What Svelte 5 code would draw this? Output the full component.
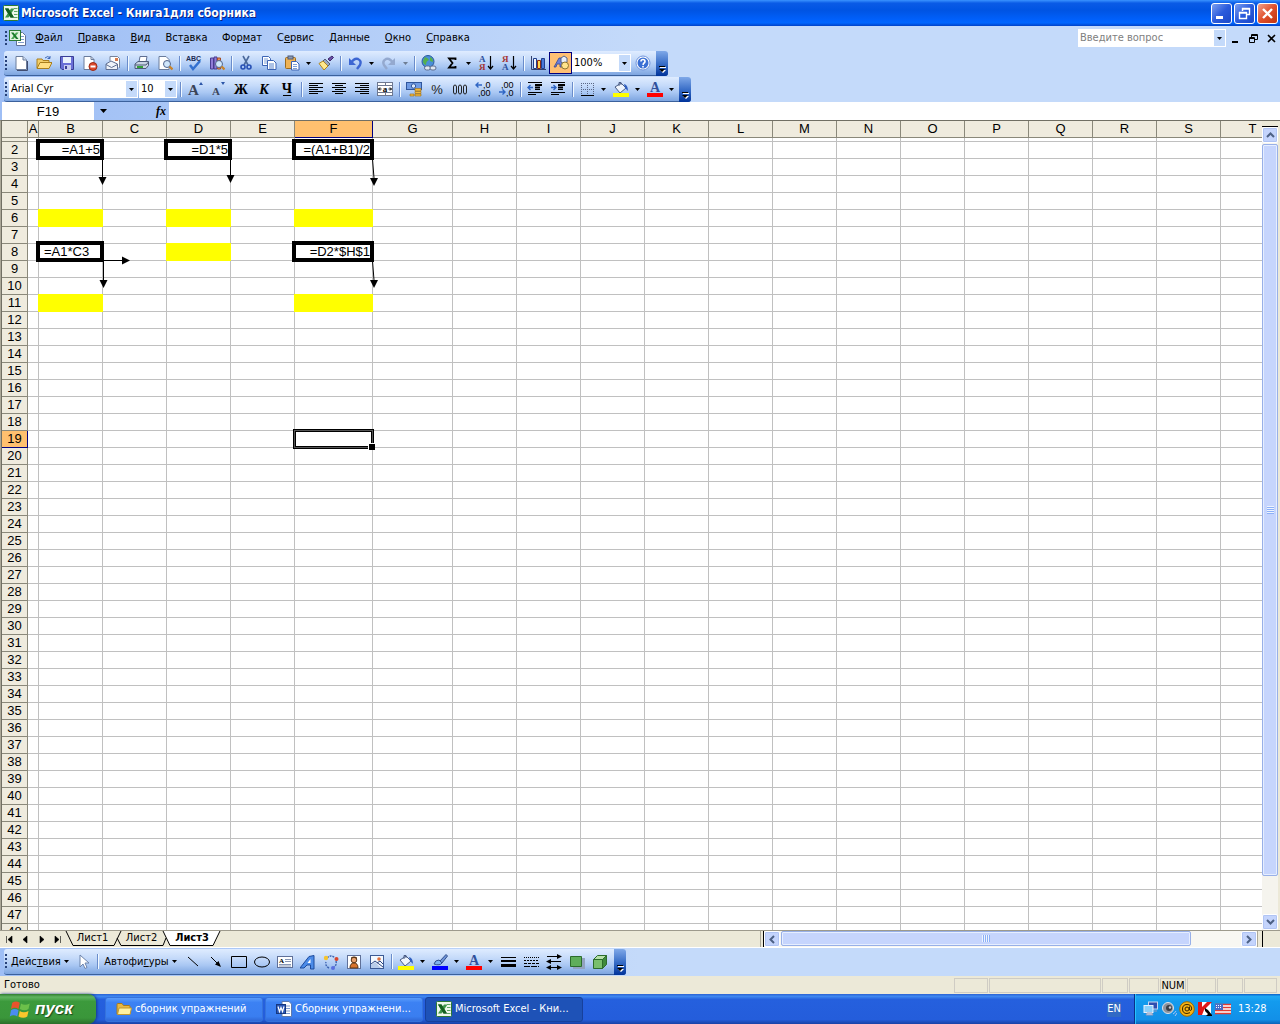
<script lang="ts">
  type Tool = { id: string; label: string; drop?: boolean; pressed?: boolean; off?: boolean }

  const SEP = 'sep'

  const menu = [
    ['', 'Ф', 'айл', 42],
    ['', 'П', 'равка', 53],
    ['', 'В', 'ид', 35],
    ['Вст', 'а', 'вка', 57],
    ['Фор', 'м', 'ат', 54],
    ['С', 'е', 'рвис', 53],
    ['', 'Д', 'анные', 55],
    ['', 'О', 'кно', 42],
    ['', 'С', 'правка', 58],
  ]

  const standard: (Tool | string)[] = [
    { id: 'blank', label: 'Создать' },
    { id: 'open', label: 'Открыть' },
    { id: 'save', label: 'Сохранить' },
    { id: 'perm', label: 'Разрешения' },
    { id: 'mail', label: 'Сообщение' },
    SEP,
    { id: 'print', label: 'Печать' },
    { id: 'preview', label: 'Предварительный просмотр' },
    SEP,
    { id: 'spell', label: 'Орфография' },
    { id: 'books', label: 'Справочные материалы' },
    SEP,
    { id: 'cut', label: 'Вырезать' },
    { id: 'copy', label: 'Копировать' },
    { id: 'paste', label: 'Вставить', drop: true },
    { id: 'brush', label: 'Формат по образцу' },
    SEP,
    { id: 'undo', label: 'Отменить', drop: true },
    { id: 'redo', label: 'Вернуть', drop: true, off: true },
    SEP,
    { id: 'link', label: 'Гиперссылка' },
    { id: 'sum', label: 'Автосумма', drop: true },
    { id: 'sortAsc', label: 'По возрастанию' },
    { id: 'sortDesc', label: 'По убыванию' },
    SEP,
    { id: 'chart', label: 'Мастер диаграмм' },
    { id: 'shapes', label: 'Рисование', pressed: true },
  ]

  const formatting: (Tool | string)[] = [
    SEP,
    { id: 'grow', label: 'Увеличить размер' },
    { id: 'shrink', label: 'Уменьшить размер' },
    { id: 'bold', label: 'Полужирный' },
    { id: 'italic', label: 'Курсив' },
    { id: 'under', label: 'Подчеркнутый' },
    SEP,
    { id: 'left', label: 'По левому краю' },
    { id: 'center', label: 'По центру' },
    { id: 'right', label: 'По правому краю' },
    { id: 'merge', label: 'Объединить ячейки' },
    SEP,
    { id: 'money', label: 'Денежный формат' },
    { id: 'percent', label: 'Процентный формат' },
    { id: 'thousand', label: 'Формат с разделителями' },
    { id: 'decInc', label: 'Увеличить разрядность' },
    { id: 'decDec', label: 'Уменьшить разрядность' },
    SEP,
    { id: 'outdent', label: 'Уменьшить отступ' },
    { id: 'indent', label: 'Увеличить отступ' },
    SEP,
    { id: 'borders', label: 'Границы', drop: true },
    { id: 'fill', label: 'Цвет заливки', drop: true },
    { id: 'color', label: 'Цвет шрифта', drop: true },
  ]

  const drawing: (Tool | string)[] = [
    { id: 'line', label: 'Линия' },
    { id: 'arrow', label: 'Стрелка' },
    { id: 'rect', label: 'Прямоугольник' },
    { id: 'oval', label: 'Овал' },
    { id: 'textbox', label: 'Надпись' },
    { id: 'wordart', label: 'Объект WordArt' },
    { id: 'diagram', label: 'Диаграмма' },
    { id: 'clip', label: 'Картинка' },
    { id: 'picture', label: 'Рисунок' },
    SEP,
    { id: 'fill', label: 'Цвет заливки', drop: true },
    { id: 'lineColor', label: 'Цвет линий', drop: true },
    { id: 'color', label: 'Цвет шрифта', drop: true },
    { id: 'weights', label: 'Тип линии' },
    { id: 'dashes', label: 'Тип штриха' },
    { id: 'arrows', label: 'Вид стрелки' },
    { id: 'shadow', label: 'Тень' },
    { id: 'cube', label: 'Объем' },
  ]

  const serif = 'font-family="Liberation Serif" font-weight="bold"'
  const sans = 'font-family="Liberation Sans"'
  const loupe =
    '<circle cx="10" cy="9" r="3.5" fill="#cfe6fb" stroke="#50648c"/><path d="M12.5 11.5l3 3" stroke="#c8842c" stroke-width="2.4"/>'
  const bucket =
    '<path d="M2 6l6-4 5 5-6 5z" fill="#eef4fc" stroke="#4a5c84"/><path d="M6 5V1.500h2V4" fill="none" stroke="#4a5c84"/><path d="M11 3q4 1 4 7l-3-3z" fill="#2f5fc0"/>'

  const icons: Record<string, string> = {
    excel:
      '<rect x=".5" y=".5" width="15" height="15" rx="1" fill="#eef7ea" stroke="#2c7a36"/><path d="M11 3.500h3.500M11 6.500h3.500M11 9.500h3.500M11 12.500h3.500" stroke="#5fa566"/><path d="M2 3.500h3.500l5.500 9H7.500z" fill="#14601f"/><path d="M8 3.500h3.500L5.500 12.500H2z" fill="#3f9648"/><path d="M2 3.500h3.500l5.500 9H7.500z" fill="#14601f"/>',
    word:
      '<path d="M6 .5h7l2.500 2.500v12.500H6z" fill="#fff" stroke="#5d79ad"/><path d="M10 5h4M10 7.500h4M10 10h4M8 12.500h6" stroke="#7d9ad0"/><rect x=".5" y="3.500" width="9" height="9" fill="#2b57b4" stroke="#16377e"/><path d="M2 5.500l1.500 5L5 6.500l1.500 4L8 5.500" fill="none" stroke="#fff" stroke-width="1.200"/>',
    folder:
      '<path d="M1 3.500q0-1 1-1h4l1.500 2H13q1 0 1 1V13H1z" fill="#e8b843" stroke="#a87a1c"/><path d="M1.500 13.500L3 7h12.500L14 13.500z" fill="#fff0a0" stroke="#c29a30"/>',
    blank: '<path d="M3 1.500h7l3.500 3.500v9.500H3z" fill="#fff" stroke="#6a7c9c"/><path d="M10 1.500V5h3.500" fill="#cfdcf0" stroke="#6a7c9c"/><path d="M4 15.500h10.500V6" fill="none" stroke="#404c70"/>',
    open: '<path d="M1 13V4h5l1 1.500h6V8" fill="#f3cf6a" stroke="#a97f1e"/><path d="M1 13.500L4 7.500h12L13 13.500z" fill="#ffdf83" stroke="#a97f1e"/><path d="M9 3q3-3 5 0m0-2v2.500h-2.500" fill="none" stroke="#3c67b8"/>',
    save: '<path d="M1.500 1.500h13v13H3l-1.500-1.500z" fill="#6a6fd6" stroke="#3a3e96"/><rect x="4" y="2" width="8" height="6" fill="#e9f1fd"/><rect x="5" y="10" width="7" height="5" fill="#c8cdf0"/><rect x="6" y="11" width="2" height="3" fill="#3a3e96"/>',
    perm: '<path d="M2 1.500h7l3 3v10H2z" fill="#fff" stroke="#6a7c9c"/><path d="M9 1.500v3h3" fill="none" stroke="#6a7c9c"/><circle cx="11" cy="11.500" r="4" fill="#de4a2c" stroke="#9c2a16"/><path d="M8.500 11.500h5" stroke="#fff" stroke-width="2"/>',
    mail: '<path d="M5 6V1.500h7.500l2 2V13" fill="#fff" stroke="#76839c"/><rect x="10" y="3" width="3" height="3" fill="#d87a4c"/><path d="M1 9l5-3 6.500 3v5.500H1z" fill="#eef2f9" stroke="#5f6f92"/><path d="M1 9.500l5.500 3 6-3" fill="none" stroke="#5f6f92"/>',
    print: '<path d="M5 7l1-5.500h7L12 7z" fill="#fff" stroke="#5f6f92"/><path d="M1 9l3-2.500h10.500v4L12 13.500H1z" fill="#c8d4e4" stroke="#4c5a78"/><path d="M1 10h11l2.500-3" fill="none" stroke="#4c5a78"/><path d="M3 12h6" stroke="#34a03a" stroke-width="2"/>',
    preview: '<path d="M2 1.500h7l3 3v10H2z" fill="#fff" stroke="#6a7c9c"/>' + loupe,
    spell: `<text x="0" y="6" font-size="7" ${sans} font-weight="bold" fill="#1c2c54">ABC</text><path d="M4 10l3 4 7-8" fill="none" stroke="#3470cf" stroke-width="2.500"/>`,
    books: '<path d="M1.500 3h3v11h-3zM5 2h3v12H5z" fill="#8f7bd6" stroke="#493b90"/><path d="M8.500 3h3v11h-3z" fill="#e88c5c" stroke="#a34d24"/>' + loupe,
    cut: '<path d="M5 1l5 9M11 1L6 10" stroke="#4c6a9c" stroke-width="1.600"/><circle cx="5" cy="12" r="2" fill="none" stroke="#2850b4" stroke-width="1.600"/><circle cx="11" cy="12" r="2" fill="none" stroke="#2850b4" stroke-width="1.600"/>',
    copy: '<path d="M1.500 1.500h6l2 2v7h-8z" fill="#fff" stroke="#3c64b4"/><path d="M3 4h4M3 6h4M3 8h4" stroke="#7ea0d8"/><path d="M6.500 5.500h6l2.500 2.500v6.500H6.500z" fill="#fff" stroke="#3c64b4"/><path d="M8 9h5M8 11h5M8 13h5" stroke="#5a84cc"/>',
    paste: '<rect x="1.500" y="2.500" width="10" height="11" rx="1" fill="#eeb255" stroke="#9c6a1c"/><rect x="4" y="1" width="5" height="3" fill="#8f9cb4" stroke="#4c5a78"/><path d="M7.500 6.500h5l2.500 2.500v6H7.500z" fill="#fff" stroke="#3c64b4"/><path d="M9 9.500h4M9 11.500h4M9 13.500h4" stroke="#7ea0d8"/>',
    brush: '<path d="M10 4l4-3 1.500 1.500L12 6z" fill="#6d4fa8" stroke="#3e2b6c"/><path d="M7 4l5 5-2 2-5-5z" fill="#9aa8c0" stroke="#55607c"/><path d="M5 6l5 5-4 4L1 8.500z" fill="#ffe88c" stroke="#ae8620"/>',
    undo: '<path d="M2 3v7h7z" fill="#3c66d2"/><path d="M4 8q3-5 7-4 4 2 2 6l-3 4" fill="none" stroke="#3c66d2" stroke-width="2.400"/>',
    redo: '<path d="M14 3v7H7z" fill="#94a9cf"/><path d="M12 8Q9 3 5 4q-4 2-2 6l3 4" fill="none" stroke="#94a9cf" stroke-width="2.400"/>',
    link: '<circle cx="7" cy="6.500" r="6" fill="#4a8fd8" stroke="#28599c"/><path d="M4 2q3 1 4 3-3 1-3 5-3-1-3-4zM9 2q3 1 3 5l-3-1z" fill="#55b04c"/><rect x="3.500" y="11" width="6" height="4" rx="2" fill="#dfe6f0" stroke="#5f6f92"/><rect x="9" y="11" width="6" height="4" rx="2" fill="#dfe6f0" stroke="#5f6f92"/>',
    sum: '<path d="M11.500 5V3.500H5L8.500 8 5 12.500h6.500V11" fill="none" stroke="#000" stroke-width="1.800"/>',
    sortAsc: `<text x="1" y="7" font-size="9" ${serif} fill="#2c4f9c">А</text><text x="1" y="15" font-size="9" ${serif} fill="#a43434">Я</text><path d="M12.500 1v12M10 11l2.500 3 2.500-3" fill="none" stroke="#000" stroke-width="1.200"/>`,
    sortDesc: `<text x="1" y="7" font-size="9" ${serif} fill="#a43434">Я</text><text x="1" y="15" font-size="9" ${serif} fill="#2c4f9c">А</text><path d="M12.500 1v12M10 11l2.500 3 2.500-3" fill="none" stroke="#000" stroke-width="1.200"/>`,
    chart: '<path d="M1.500 1v13.500H16" fill="none" stroke="#33406c"/><path d="M3.500 3.500h3v10h-3z" fill="#eef2fb" stroke="#22408c"/><path d="M7.500 5.500h3v8h-3z" fill="#ffd54a" stroke="#8c2a14"/><path d="M11.500 3.500h3v10h-3z" fill="#4a78d8" stroke="#22408c"/>',
    shapes: '<path d="M1 12L6 3h2l2 9H7V9H4l-1 3z" fill="#6c7fd8" stroke="#3a4890" stroke-width=".8"/><path d="M8 3l3-2 3 2v4l-3 2-3-2z" fill="#e8eefa" stroke="#55648c"/><circle cx="12" cy="10.500" r="3.500" fill="#ffe48c" stroke="#8c7430"/>',
    help: '<circle cx="8" cy="8" r="7" fill="#fff" stroke="#6f94dc"/><circle cx="8" cy="8" r="5.500" fill="#3a6fd4"/><path d="M6 6.500Q6 4.500 8 4.500t2 2Q10 7.500 8.500 8.500L8 10M8 11v1.500" fill="none" stroke="#fff" stroke-width="1.600"/>',
    grow: `<text x="1" y="14" font-size="15" ${serif} fill="#3a4458">A</text><path d="M12 4l2-3 2 3z" fill="#2c55a8"/>`,
    shrink: `<text x="2" y="14" font-size="11" ${serif} fill="#3a4458">A</text><path d="M11 1h4l-2 3z" fill="#2c55a8"/>`,
    bold: `<text x="8" y="13" font-size="14" text-anchor="middle" ${serif}>Ж</text>`,
    italic: `<text x="8" y="13" font-size="14" text-anchor="middle" font-style="italic" ${serif}>К</text>`,
    under: `<text x="8" y="12" font-size="14" text-anchor="middle" ${serif}>Ч</text><path d="M4 14.500h8" stroke="#000"/>`,
    left: '<path d="M1 2.500h14M1 4.500h9M1 6.500h14M1 8.500h9M1 10.500h14M1 12.500h9" stroke="#000"/>',
    center: '<path d="M1 2.500h14M4 4.500h8M1 6.500h14M4 8.500h8M1 10.500h14M4 12.500h8" stroke="#000"/>',
    right: '<path d="M1 2.500h14M6 4.500h9M1 6.500h14M6 8.500h9M1 10.500h14M6 12.500h9" stroke="#000"/>',
    merge: `<rect x=".5" y="1.500" width="15" height="13" fill="#fff" stroke="#6e7890"/><path d="M1 4.500h14M1 11.500h14M8.500 2v2.500M8.500 12v2.500" stroke="#6e7890"/><text x="8" y="10.500" font-size="9" text-anchor="middle" ${serif}>a</text><path d="M1.500 8h3M11.500 8h3M3 6.500L1.500 8 3 9.500M13 6.500L14.500 8 13 9.500" fill="none" stroke="#000"/>`,
    money: '<rect x=".5" y="1.500" width="15" height="7" fill="#6f9be4" stroke="#2f569c"/><circle cx="7.500" cy="5" r="2.200" fill="#dce9fb" stroke="#2f569c"/><path d="M9 7.500h6v2.500H9zM9 10.500h6v2H9zM9 13h6v2H9zM4 13h4v2H4z" fill="#f2b93c" stroke="#9c6c14" stroke-width=".6"/>',
    percent: `<text x="8" y="13" font-size="13" text-anchor="middle" ${sans} fill="#222">%</text>`,
    thousand: '<path d="M1.500 6q0-2 1.500-2t1.500 2v5q0 2-1.500 2t-1.500-2zM6.500 6q0-2 1.500-2t1.500 2v5q0 2-1.500 2t-1.500-2zM11.500 6q0-2 1.500-2t1.500 2v5q0 2-1.500 2t-1.500-2z" fill="none" stroke="#222"/>',
    decInc: `<path d="M7 4H1M3.500 1.500L1 4l2.500 2.500" fill="none" stroke="#2f66c4" stroke-width="1.400"/><text x="8" y="7" font-size="9" ${sans}>,0</text><text x="3" y="15" font-size="9" ${sans}>,00</text>`,
    decDec: `<path d="M1 11h6M4.500 8.500L7 11l-2.500 2.500" fill="none" stroke="#2f66c4" stroke-width="1.400"/><text x="3" y="7" font-size="9" ${sans}>,00</text><text x="8" y="15" font-size="9" ${sans}>,0</text>`,
    outdent: '<path d="M1 1.500h14M8 8.500h5M1 11.500h14M1 13.500h8" stroke="#000"/><path d="M8 4h7M8 6.500h5" stroke="#000" stroke-width="1.800"/><path d="M6 6.500H1M3.500 4L1 6.500 3.500 9" fill="none" stroke="#2f66c4" stroke-width="1.400"/>',
    indent: '<path d="M1 1.500h14M8 8.500h5M1 11.500h14M1 13.500h8" stroke="#000"/><path d="M8 4h7M8 6.500h5" stroke="#000" stroke-width="1.800"/><path d="M1 6.500h5M3.500 4L6 6.500 3.500 9" fill="none" stroke="#2f66c4" stroke-width="1.400"/>',
    borders: '<path d="M2.500 2v11M14.500 2v11M8.500 2v11M2 2.500h13M2 8.500h13" stroke="#5a6684" stroke-dasharray="1 1"/><path d="M2 14.500h13" stroke="#000"/>',
    fill: bucket + '<path d="M0 12h16v4H0z" fill="#ff0"/>',
    color: `<text x="8" y="11" font-size="14" text-anchor="middle" ${serif} fill="#30509c">A</text><path d="M0 12h16v4H0z" fill="#f00"/>`,
    lineColor: '<path d="M8 7l6-6.500L15.500 2 10 9z" fill="#6e93d8" stroke="#33508c"/><path d="M2 10q1-4 5-4l3 3q-2 3-8 1z" fill="#7fb2f0" stroke="#33508c"/><path d="M0 12h16v4H0z" fill="#00f"/>',
    pointer: '<path d="M5 1v12l3-3 2 4.500 2-1-2-4.500h4z" fill="#fff" stroke="#6d84ac"/>',
    line: '<path d="M3 3l10 9" stroke="#000"/>',
    arrow: '<path d="M3 3l6 6" stroke="#000"/><path d="M13 13L7 10.500 10.500 7z" fill="#000"/>',
    rect: '<path d="M.5 2.500h15v11H.5z" fill="none" stroke="#000"/>',
    oval: '<ellipse cx="8" cy="8" rx="7.500" ry="5" fill="none" stroke="#000"/>',
    textbox: `<rect x=".5" y="2.500" width="15" height="11" fill="#fff" stroke="#5f7098"/><text x="2" y="9" font-size="7" ${serif}>A</text><path d="M8 5.500h6M8 7.500h6M2 10.500h12M2 12h12" stroke="#8796b4"/>`,
    wordart: '<path d="M0 14L9 2.500l5-1V15h-3.500v-4H7l-3 3z" fill="#4b8be8" stroke="#1d4a9c"/><path d="M10.500 5v4H7.500z" fill="#fff"/>',
    diagram: '<path d="M4 4q4-4 8 0M13 7q1 4-2 6M6 14q-4-2-3-6" fill="none" stroke="#3c62b0" stroke-width="1.400" stroke-dasharray="2 1"/><circle cx="3" cy="4" r="2.200" fill="#f4c430"/><circle cx="13.500" cy="5" r="2" fill="#d8442c"/><circle cx="10" cy="14" r="2" fill="#5a6fe0"/>',
    clip: '<rect x="1.500" y="1.500" width="13" height="13" fill="#fff" stroke="#5f7098"/><circle cx="8" cy="6" r="2.800" fill="#e8a06c" stroke="#5a3414"/><path d="M4 14q0-5 4-5t4 5z" fill="#d8742c" stroke="#5a3414"/><path d="M5 5q2-3 6 0v-1.500q-3-2-6 0z" fill="#5a3414"/>',
    picture: '<rect x="1.500" y="1.500" width="13" height="13" fill="#f4f9ff" stroke="#3c5a94"/><circle cx="10" cy="5" r="1.800" fill="#e0703c"/><path d="M2 11l4-3 6 6H2z" fill="#b9cdea"/><path d="M2 10l4-3 8 6M8 9l3-2 3 3" fill="none" stroke="#2c4680"/>',
    weights: '<path d="M1 3.500h15" stroke="#000"/><path d="M1 7h15" stroke="#000" stroke-width="2"/><path d="M1 11.500h15" stroke="#000" stroke-width="3"/>',
    dashes: '<path d="M1 3.500h15" stroke="#000" stroke-dasharray="1 1"/><path d="M1 6.500h15" stroke="#000" stroke-dasharray="2 1"/><path d="M1 9.500h15" stroke="#000" stroke-dasharray="3 1"/><path d="M1 12.500h15" stroke="#000" stroke-dasharray="6 1"/>',
    arrows: '<path d="M1 2.500h14M1 7.500h14M1 13.500h14" stroke="#000"/><path d="M11 0l5 2.500L11 5zM5 5L0 7.500 5 10zM5 11l-5 2.500L5 16zM11 11l5 2.500-5 2.500z"/>',
    shadow: '<path d="M4 4h12v11H4z" fill="#92a2c0"/><path d="M1.500 2.500h11v10h-11z" fill="#5fae5a" stroke="#2c6c2c"/>',
    cube: '<path d="M1.500 5.500h9v9h-9z" fill="#79bf6d" stroke="#2c6c2c"/><path d="M1.500 5.500l4-4h9l-4 4z" fill="#b6e0a8" stroke="#2c6c2c"/><path d="M10.500 14.500v-9l4-4v9z" fill="#3f8a3c" stroke="#2c6c2c"/>',
    flag: '<path d="M1 3q3-2 6 0L6 8Q3 6 0 8z" fill="#e8532c"/><path d="M8 3.500q3 2 7 0L14 8q-3 2-7 0z" fill="#6cc04a"/><path d="M0 9q3-2 6 0L5 14q-3-2-6 0z" fill="#4b8cf0"/><path d="M7 9.500q3 2 7 0L13 14q-3 2-7 0z" fill="#fbc62c"/>',
    net: '<rect x="5.500" y="1" width="9" height="7" fill="#2f4fb0" stroke="#c9d6ee"/><rect x="1" y="4.500" width="9" height="7" fill="#8ad0fa" stroke="#e8f0fc"/><path d="M3 14h7l-1-2H4zM11 10h3" fill="#d4dced" stroke="#8c9cc0"/>',
    sound: '<circle cx="7" cy="7" r="5.500" fill="#8c929c" stroke="#e0e4ea"/><circle cx="8" cy="7" r="3" fill="#3a3f48"/><circle cx="9" cy="6.500" r="1.200" fill="#c8ccd4"/><path d="M12 13q2-1 3-3M14 15l2-3" fill="none" stroke="#a9c4f4"/>',
    agent: '<circle cx="8" cy="8" r="7.300" fill="#f6b213" stroke="#9c6a00"/><circle cx="8" cy="8" r="2" fill="none" stroke="#3a2800"/><path d="M10.500 5.500v3.500q1.500 1.500 2.200-1Q12.500 3.500 8 3.500T3.500 8 8 12.500l3-.8" fill="none" stroke="#3a2800"/>',
    kav: '<path d="M1 1h13v13H1z" fill="#fff"/><path d="M1 1h4v5l5-5h5L7 9l-2 5H1z" fill="#e01818"/><path d="M8 7l3 2 4 5v1H9l2-2-3-3z" fill="#000"/>',
    usa: '<path d="M0 3h16v10H0z" fill="#fff"/><path d="M0 3.500h16M0 6.500h16M0 9.500h16M0 12.500h16" stroke="#e03c34" stroke-width="1.500"/><path d="M0 3h8v6H0z" fill="#4a6cc8"/><path d="M1 4.500h6M1 6.500h6" stroke="#fff" stroke-dasharray="1 1"/>',
  }

  const columns = [
    ['A', 11], ['B', 64], ['C', 64], ['D', 64], ['E', 64], ['F', 78], ['G', 80],
    ...'HIJKLMNOPQRST'.split('').map((c) => [c, 64]),
  ] as [string, number][]
  const rows = Array.from({ length: 47 }, (_, i) => i + 2)

  const boxed: Record<string, string> = {
    B2: '=A1+5',
    D2: '=D1*5',
    F2: '=(A1+B1)/2',
    B8: '=A1*C3',
    F8: '=D2*$H$1',
  }
  const yellow = ['B6', 'D6', 'F6', 'D8', 'B11', 'F11']

  let active = $state('F19')
  let sheet = $state('Лист3')
  let question = $state('')

  const tabNav = [
    ['Первый лист', 'M1.500 1v7M7 1v7L3 4.500z'],
    ['Предыдущий лист', 'M6 1v7L2 4.500z'],
    ['Следующий лист', 'M3 1v7l4-3.500z'],
    ['Последний лист', 'M2 1v7l4-3.500zM7.500 1v7'],
  ]
  const panels = [34, 112, 26, 30, 26, 29, 26, 33]
</script>

{#snippet icon(id: string)}
  <svg class="icon" width="16" height="16" viewBox="0 0 16 16" aria-hidden="true">{@html icons[id]}</svg>
{/snippet}

{#snippet caret()}
  <svg class="caret" width="5" height="3" viewBox="0 0 5 3" aria-hidden="true"><path d="M0 0h5L2.500 3z" /></svg>
{/snippet}

{#snippet tools(list: (Tool | string)[])}
  {#each list as tool}
    {#if typeof tool === 'string'}
      <span class="sep"></span>
    {:else}
      <button class="tool" class:pressed={tool.pressed} aria-label={tool.label}>{@render icon(tool.id)}</button>
      {#if tool.drop}
        <button class="drop" class:off={tool.off} aria-label="{tool.label}: список">{@render caret()}</button>
      {/if}
    {/if}
  {/each}
{/snippet}

{#snippet cap()}
  <button class="cap" aria-label="Параметры панелей инструментов">
    <svg width="7" height="8" viewBox="0 0 7 8">
      <path d="M1 1h6v1H1zM1 4h6L4 7z" fill="#fff" />
      <path d="M0 0h6v1H0zM0 3h6L3 6z" />
    </svg>
  </button>
{/snippet}

<div class="window">
  <header class="title">
    {@render icon('excel')}
    <h1>Microsoft Excel - Книга1для сборника</h1>
    <button class="win" aria-label="Свернуть"><svg width="19" height="19"><path d="M4 12h7v3H4z" fill="#fff" /></svg></button>
    <button class="win" aria-label="Восстановить">
      <svg width="19" height="19"><path d="M7.500 7V4.500h7v6H12M7 5h8" fill="none" stroke="#fff" stroke-width="1.400" /><path d="M4.500 8.500h7v6h-7zM4 9h8" fill="none" stroke="#fff" stroke-width="1.400" /></svg>
    </button>
    <button class="win close" aria-label="Закрыть"><svg width="19" height="19"><path d="M5 5l9 9M14 5l-9 9" stroke="#fff" stroke-width="2.400" /></svg></button>
  </header>

  <div class="bars">
    <nav class="menu">
      <span class="grip"></span>
      <span class="doc">
        <svg width="18" height="16" viewBox="0 0 18 16" aria-hidden="true">
          <path d="M7.500 2.500h6l3 3v10h-9z" fill="#fff" stroke="#5f7098" /><path d="M12 6.500h3M12 9.500h3M9 12.500h6" stroke="#7f9ccc" />
          <rect x=".5" y=".5" width="11" height="10" fill="#e2f2df" stroke="#2c7a36" /><path d="M7 2.500h2.500L4.500 9H2z" fill="#4aa552" /><path d="M2 2.500h2.500l5 6.500H7z" fill="#1b7a2b" />
        </svg>
      </span>
      {#each menu as [before, key, after, width]}
        <button style="width: {width}px">{before}<u>{key}</u>{after}</button>
      {/each}
      <label class="combo question">
        <select bind:value={question} aria-label="Введите вопрос"><option value="">Введите вопрос</option></select>
        <span class="arrow">{@render caret()}</span>
      </label>
      <button class="mini" aria-label="Свернуть окно"><svg width="9" height="9"><path d="M1 7h6v2H1z" /></svg></button>
      <button class="mini" aria-label="Восстановить окно">
        <svg width="9" height="9"><path d="M2.500 3V.5h6v5H6M2 1.500h7M.5 3.500h5v5h-5zM0 4.500h6" fill="none" stroke="#000" /></svg>
      </button>
      <button class="mini" aria-label="Закрыть окно"><svg width="9" height="9"><path d="M1 1l7 7M8 1L1 8" stroke="#000" stroke-width="1.600" /></svg></button>
    </nav>

    <div class="toolbar">
      <span class="grip"></span>
      {@render tools(standard)}
      <label class="combo zoom">
        <select aria-label="Масштаб"><option>100%</option></select>
        <span class="arrow">{@render caret()}</span>
      </label>
      <button class="tool" aria-label="Справка">{@render icon('help')}</button>
      {@render cap()}
    </div>

    <div class="toolbar">
      <span class="grip"></span>
      <label class="combo font">
        <select aria-label="Шрифт"><option>Arial Cyr</option></select>
        <span class="arrow">{@render caret()}</span>
      </label>
      <label class="combo size">
        <select aria-label="Размер"><option>10</option></select>
        <span class="arrow">{@render caret()}</span>
      </label>
      {@render tools(formatting)}
      {@render cap()}
    </div>

    <div class="formula">
      <input class="name" aria-label="Имя" bind:value={active} />
      <button class="names" aria-label="Список имен"><svg width="7" height="4"><path d="M0 0h7L3.500 4z" /></svg></button>
      <button class="fx" aria-label="Вставка функции"><i>fx</i></button>
      <input class="value" aria-label="Строка формул" />
    </div>
  </div>

  <main class="sheet">
    <div class="grid">
      <table>
        <colgroup>
          <col class="heads" />
          {#each columns as [, width]}<col style="width: {width}px" />{/each}
        </colgroup>
        <thead>
          <tr>
            <th></th>
            {#each columns as [name]}
              <th class:current={active.startsWith(name)}>{name}</th>
            {/each}
          </tr>
        </thead>
        <tbody>
          <tr class="first">
            <th></th>
            {#each columns as [name]}<td aria-label="{name}1"></td>{/each}
          </tr>
          {#each rows as row}
            <tr>
              <th class:current={active.slice(1) === String(row)}>{row}</th>
              {#each columns as [name]}
                {@const ref = name + row}
                <td
                  class:boxed={boxed[ref]}
                  class:textual={ref === 'B8'}
                  class:yellow={yellow.includes(ref)}
                  class:active={active === ref}
                >{boxed[ref] ?? ''}</td>
              {/each}
            </tr>
          {/each}
        </tbody>
      </table>
      <!-- arrows showing where each formula is copied -->
      <svg class="arrows" width="400" height="180" aria-hidden="true">
        <g fill="none" stroke="#000">
          <path d="M99.500 38v18M227.500 38v16M369.500 38L371 57M100.500 140v19M101 139.500h19M369.500 140L371 159" />
        </g>
        <path d="M95.500 56h8l-4 8zM223.500 54h8l-4 8zM367 57h8l-4 8zM96.500 159h8l-4 8zM119 135.500v8l8-4zM367 159h8l-4 8z" />
      </svg>
    </div>

    <div class="vscroll">
      <span class="split"></span>
      <button class="step" aria-label="Вверх"><svg width="9" height="6"><path d="M1 5l3.500-3.500L8 5" /></svg></button>
      <div class="track">
        <div class="thumb"><i></i></div>
      </div>
      <button class="step" aria-label="Вниз"><svg width="9" height="6"><path d="M1 1l3.500 3.500L8 1" /></svg></button>
    </div>
  </main>

  <div class="tabs">
    {#each tabNav as [label, d]}
      <button class="nav" aria-label={label}><svg width="9" height="9"><path {d} /></svg></button>
    {/each}
    <svg class="edge" width="10" height="16"><path d="M1 0l7 14.500h2" /></svg>
    <button class="tab" class:on={sheet === 'Лист1'} onclick={() => (sheet = 'Лист1')}>Лист1</button>
    <svg class="edge" width="14" height="16"><path d="M0 14.500h4L11 0M7 7l4 7.500h3" /></svg>
    <button class="tab" class:on={sheet === 'Лист2'} onclick={() => (sheet = 'Лист2')}>Лист2</button>
    <svg class="edge" width="14" height="16"><path class="paper" d="M4 0l7 14.500h3V0z" /><path d="M0 14.500h4L7 7M4 0l7 14.500h3" /></svg>
    <button class="tab last" class:on={sheet === 'Лист3'} onclick={() => (sheet = 'Лист3')}>Лист3</button>
    <svg class="edge" width="10" height="16"><path class="paper" d="M0 0v14.500h2L9 0z" /><path d="M0 14.500h2L9 0" /></svg>
    <div class="hscroll">
      <span class="divider"></span>
      <button class="step" aria-label="Влево"><svg width="6" height="9"><path d="M5 1L1.500 4.500 5 8" /></svg></button>
      <div class="track">
        <div class="thumb"><i></i></div>
      </div>
      <button class="step" aria-label="Вправо"><svg width="6" height="9"><path d="M1 1l3.500 3.500L1 8" /></svg></button>
      <span class="stop"></span>
    </div>
  </div>

  <div class="bars drawing">
    <div class="toolbar">
      <span class="grip"></span>
      <button class="label actions">Дейс<u>т</u>вия {@render caret()}</button>
      <button class="tool" aria-label="Выбор объектов">{@render icon('pointer')}</button>
      <span class="sep"></span>
      <button class="label auto">Автофи<u>г</u>уры {@render caret()}</button>
      {@render tools(drawing)}
      {@render cap()}
    </div>
  </div>

  <footer class="status">
    <span class="ready">Готово</span>
    {#each panels as width, i}
      <span class="panel" style="width: {width}px">{i === 4 ? 'NUM' : ''}</span>
    {/each}
  </footer>

  <div class="taskbar">
    <button class="start">{@render icon('flag')}<b>пуск</b></button>
    <button class="task">{@render icon('folder')}<span>сборник упражнений</span></button>
    <button class="task">{@render icon('word')}<span>Сборник упражнени...</span></button>
    <button class="task current">{@render icon('excel')}<span>Microsoft Excel - Кни...</span></button>
    <button class="lang">EN</button>
    <div class="tray">
      {@render icon('net')}{@render icon('sound')}{@render icon('agent')}{@render icon('kav')}{@render icon('usa')}
      <time>13:28</time>
    </div>
  </div>
</div>

<style>
  :global(body) {
    margin: 0;
    overflow: hidden;
  }

  .window {
    display: flex;
    flex-direction: column;
    height: 100vh;
    overflow: hidden;
    background: #ece9d8;
    color: #000;
    font: 11px/14px 'DejaVu Sans Condensed', 'DejaVu Sans', sans-serif;
  }

  .window * {
    box-sizing: border-box;
  }

  button,
  select,
  input {
    margin: 0;
    padding: 0;
    border: 0;
    border-radius: 0;
    background: none;
    color: inherit;
    font: inherit;
    outline: none;
  }

  svg {
    display: block;
    flex: none;
  }

  /* title bar */
  .title {
    display: flex;
    align-items: center;
    gap: 2px;
    flex: none;
    height: 26px;
    padding: 0 2px 0 3px;
    background: linear-gradient(#3a93ff, #0a5be6 12%, #0054e3 40%, #0060fb 75%, #0066ff 88%, #0042c8);
  }

  .title h1 {
    flex: 1;
    margin: 0;
    color: #fff;
    font-size: 12px;
    line-height: 16px;
    text-shadow: 1px 1px #0f1f7c;
    white-space: nowrap;
  }

  .win {
    width: 21px;
    height: 21px;
    border: 1px solid #fff;
    border-radius: 3px;
    background: linear-gradient(135deg, #7c9ff0, #2a5bdc 50%, #1b48c8);
  }

  .win.close {
    background: linear-gradient(135deg, #f0a08c, #e0502c 50%, #c03410);
  }

  /* menu and toolbars */
  .bars {
    flex: none;
    background: linear-gradient(90deg, #9ebef5, #c4dafa 640px);
  }

  .menu {
    display: flex;
    align-items: center;
    height: 24px;
    padding-left: 4px;
  }

  .menu button {
    flex: none;
    height: 20px;
    white-space: nowrap;
  }

  .menu .mini {
    display: grid;
    place-items: center;
    width: 18px;
  }

  .doc {
    margin-right: 1px;
  }

  .grip {
    flex: none;
    width: 5px;
    height: 15px;
    background: repeating-linear-gradient(#27417a 0 2px, transparent 2px 4px) 1px 0 / 2px 100% no-repeat;
  }

  .toolbar {
    display: flex;
    align-items: center;
    width: max-content;
    height: 25px;
    margin: 1px 0 0 4px;
    border-bottom: 1px solid #3b619c;
    border-radius: 3px;
    background: linear-gradient(#dfecff, #c6dbfa 35%, #a9c7f3 65%, #7da5e0);
  }

  .tool {
    display: grid;
    place-items: center;
    width: 23px;
    height: 22px;
  }

  .tool.pressed {
    border: 1px solid #000080;
    background: #ffc073;
  }

  .drop {
    display: grid;
    place-items: center;
    width: 11px;
    height: 22px;
  }

  .drop.off {
    opacity: 0.4;
  }

  .sep {
    flex: none;
    width: 6px;
    height: 15px;
    background: linear-gradient(90deg, transparent 3px, #6a8ccb 3px 4px, #f1f9ff 4px 5px, transparent 5px);
  }

  .cap {
    display: flex;
    justify-content: center;
    align-items: flex-end;
    width: 12px;
    height: 25px;
    margin: 0 0 -1px 2px;
    padding-bottom: 2px;
    border-radius: 0 3px 3px 0;
    background: linear-gradient(#7fa8e8, #3a6fc8 50%, #00339a);
  }

  .combo {
    display: grid;
    flex: none;
    height: 18px;
    border: 1px solid #fff;
    background: #fff;
  }

  .combo > * {
    grid-area: 1 / 1;
  }

  .combo select {
    width: 100%;
    height: 16px;
    padding-left: 1px;
    appearance: none;
  }

  .arrow {
    display: grid;
    place-items: center;
    justify-self: end;
    width: 11px;
    height: 16px;
    background: #c4dafa;
    pointer-events: none;
  }

  .question {
    width: 148px;
    margin: 0 0 0 auto;
    color: #808080;
  }

  .zoom {
    width: 59px;
  }

  .font {
    width: 129px;
  }

  .size {
    width: 38px;
    margin-left: 1px;
  }

  .label {
    display: flex;
    justify-content: center;
    align-items: center;
    height: 22px;
    white-space: pre;
  }

  .actions {
    width: 62px;
  }

  .auto {
    width: 81px;
  }

  .formula {
    display: flex;
    height: 18px;
    padding-left: 2px;
    font: 13px/17px 'Liberation Sans', sans-serif;
  }

  .name {
    width: 92px;
    background: #fff;
    text-align: center;
  }

  .names {
    display: grid;
    place-items: center;
    width: 19px;
  }

  .fx {
    width: 56px;
    padding-left: 40px;
    font: bold 12px/16px 'Liberation Serif', serif;
  }

  .value {
    flex: 1;
    background: #fff;
  }

  /* worksheet */
  .sheet {
    display: flex;
    flex: 1;
    min-height: 0;
    padding-right: 2px;
    border-top: 1px solid #716f64;
    border-left: 1px solid #aca899;
  }

  .grid {
    position: relative;
    flex: 1;
    min-width: 0;
    overflow: hidden;
    border-left: 1px solid #716f64;
    background: #fff;
  }

  table {
    width: 1px;
    table-layout: fixed;
    border-spacing: 0;
    font: 13px/16px 'Liberation Sans', sans-serif;
  }

  .heads {
    width: 26px;
  }

  th,
  td {
    height: 17px;
    padding: 0;
    border: solid #c0c0c0;
    border-width: 0 1px 1px 0;
    white-space: nowrap;
  }

  th {
    border-color: #8a887a;
    background: #efebde;
    font-weight: normal;
    text-align: center;
  }

  th.current {
    border-color: #000080;
    background: #ffc06f;
  }

  td {
    padding-right: 2px;
    text-align: right;
  }

  .first th,
  .first td {
    height: 4px;
  }

  .boxed,
  .active {
    position: relative;
  }

  .boxed::after {
    content: '';
    position: absolute;
    inset: -3px -2px -2px -3px;
    border: 4px solid #000;
  }

  .textual {
    padding-left: 5px;
    text-align: left;
  }

  .yellow {
    border-color: #ff0;
    background: #ff0;
    box-shadow: -1px -1px #ff0, 0 -1px #ff0, -1px 0 #ff0;
  }

  .active::before {
    content: '';
    position: absolute;
    inset: -2px;
    border: 3px double #000;
    background: linear-gradient(#fff, #fff) padding-box, linear-gradient(#555, #555) border-box;
  }

  .active::after {
    content: '';
    position: absolute;
    right: -3px;
    bottom: -3px;
    width: 6px;
    height: 6px;
    border: solid #fff;
    border-width: 1px 0 0 1px;
    background: #000;
  }

  .arrows {
    position: absolute;
    top: 0;
    left: 1px;
  }

  /* scroll bars */
  .vscroll {
    display: flex;
    flex-direction: column;
    width: 16px;
    background: #f5f4ee;
  }

  .split {
    height: 6px;
    border-bottom: 1px solid #000;
    background: #ece9d8;
  }

  .step {
    display: grid;
    place-items: center;
    flex: none;
    width: 16px;
    height: 16px;
    border: 1px solid #fff;
    border-radius: 2px;
    background: #c4d4fc;
    box-shadow: inset 0 0 0 1px #b0c4f4;
  }

  .step path {
    fill: none;
    stroke: #4d6185;
    stroke-width: 2;
  }

  .track {
    flex: 1;
    min-width: 0;
    min-height: 0;
  }

  .thumb {
    display: grid;
    place-items: center;
    border: 1px solid #98b0e8;
    border-radius: 2px;
    background: #c6d5fd;
    box-shadow: inset 0 0 0 1px #e6eeff;
  }

  .vscroll .thumb {
    height: 95%;
    margin-top: 1px;
  }

  .vscroll .thumb i {
    width: 7px;
    height: 8px;
    background: repeating-linear-gradient(#eef4fe 0 1px, #8cb0f8 1px 2px);
  }

  .hscroll .thumb {
    width: 89%;
    height: 15px;
    margin-left: 1px;
  }

  .hscroll .thumb i {
    width: 8px;
    height: 7px;
    background: repeating-linear-gradient(90deg, #eef4fe 0 1px, #8cb0f8 1px 2px);
  }

  /* sheet tabs */
  .tabs {
    display: flex;
    flex: none;
    height: 18px;
    padding-left: 1px;
    border-top: 1px solid #9d9a8c;
    border-bottom: 1px solid #fff;
  }

  .nav {
    display: grid;
    place-items: center;
    width: 16px;
    height: 16px;
  }

  .nav path {
    stroke: #000;
    stroke-width: 0.6;
  }

  .edge path {
    fill: none;
    stroke: #000;
  }

  .edge .paper {
    fill: #fff;
    stroke: none;
  }

  .tab {
    width: 35px;
    height: 15px;
    border-bottom: 1px solid #000;
    white-space: nowrap;
  }

  .tab.last {
    width: 38px;
  }

  .tab.on {
    background: #fff;
    font-weight: bold;
  }

  .hscroll {
    display: flex;
    width: 503px;
    margin: 0 17px 0 auto;
    border-right: 1px solid #000;
    background: #f8f7f2;
  }

  .divider {
    width: 4px;
    border: solid #aca899;
    border-width: 0 1px;
    border-right-color: #000;
    background: #ece9d8;
  }

  .stop {
    width: 5px;
    border-left: 1px solid #aca899;
    background: #ece9d8;
  }

  /* drawing panel, status and task bar */
  .drawing {
    height: 28px;
    padding-top: 1px;
  }

  .drawing .toolbar {
    margin-top: 0;
    height: 26px;
  }

  .drawing .cap {
    height: 26px;
    margin-left: 3px;
  }

  .status {
    display: flex;
    align-items: center;
    gap: 1px;
    flex: none;
    height: 18px;
    padding: 0 3px 0 4px;
  }

  .ready {
    flex: 1;
  }

  .panel {
    height: 15px;
    border: 1px solid #cfccc4;
    text-align: center;
  }

  .taskbar {
    display: flex;
    align-items: center;
    flex: none;
    height: 30px;
    background: linear-gradient(#2a62d4, #3f88f0 8%, #2560de 18%, #245ddb 85%, #1941a5);
    color: #fff;
  }

  .start {
    display: flex;
    align-items: center;
    gap: 4px;
    width: 96px;
    height: 30px;
    margin-right: 9px;
    padding-left: 11px;
    border-radius: 0 8px 8px 0;
    background: linear-gradient(#2f7d2f, #5fb45f 10%, #3c9a3c 25%, #3a963a 80%, #2a6e2a);
    box-shadow: 1px 0 3px #123a8c;
    font: italic bold 17px/20px 'Liberation Sans', sans-serif;
    text-shadow: 1px 1px 1px #1c481c;
  }

  .start :global(.icon) {
    width: 20px;
    height: 20px;
    overflow: visible;
  }

  .task {
    display: flex;
    align-items: center;
    gap: 3px;
    width: 158px;
    height: 25px;
    margin-right: 2px;
    padding-left: 10px;
    border: 1px solid #3572dc;
    border-radius: 3px;
    background: linear-gradient(#5a9cfa, #3c81f3 20%, #3a7ef0 80%, #2f68d6);
    white-space: nowrap;
  }

  .task.current {
    border-color: #17409c;
    background: #1e52b7;
  }

  .lang {
    width: 14px;
    height: 15px;
    margin-left: auto;
    background: #316ac5;
  }

  .tray {
    display: flex;
    align-items: center;
    gap: 2px;
    width: 146px;
    height: 30px;
    margin-left: 13px;
    padding-left: 8px;
    border-left: 1px solid #0b2f88;
    background: linear-gradient(#0c5fc8, #1ea8f4 8%, #139bee 25%, #1290e8 85%, #0b62b8);
    box-shadow: inset 1px 0 #27c3fc;
  }

  time {
    margin-left: 5px;
  }
</style>
